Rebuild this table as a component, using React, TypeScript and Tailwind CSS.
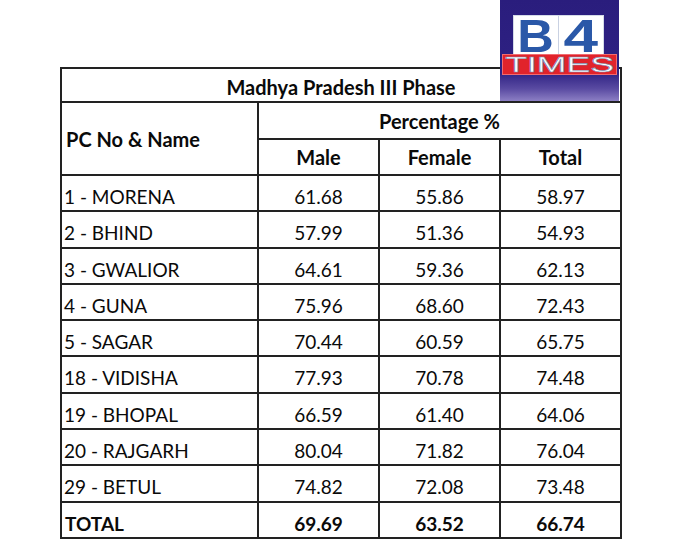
import React from "react";

const rows: [string, string, string, string][] = [
  ["1 - MORENA", "61.68", "55.86", "58.97"],
  ["2 - BHIND", "57.99", "51.36", "54.93"],
  ["3 - GWALIOR", "64.61", "59.36", "62.13"],
  ["4 - GUNA", "75.96", "68.60", "72.43"],
  ["5 - SAGAR", "70.44", "60.59", "65.75"],
  ["18 - VIDISHA", "77.93", "70.78", "74.48"],
  ["19 - BHOPAL", "66.59", "61.40", "64.06"],
  ["20 - RAJGARH", "80.04", "71.82", "76.04"],
  ["29 - BETUL", "74.82", "72.08", "73.48"],
];

function Logo() {
  return (
    <div className="absolute left-[500px] top-0 w-[119px] h-[101px] bg-[linear-gradient(to_bottom,#2a1d7d_0%,#2e2183_72%,#5a4ba2_88%,#8c7fc4_100%)]">
      <div className="absolute left-[13px] top-[15px] w-[91px] h-[40px] bg-white border border-[#d5dbe8] flex">
        <div className="w-1/2 h-full border-r border-[#c9d1e2]" />
        <div className="w-1/2 h-full" />
      </div>
      <div className="absolute left-[13px] top-[16px] w-[45px] h-[38px] overflow-hidden text-center text-[46px] leading-[38px] font-bold text-[#2a58a8] [font-family:'Liberation_Sans',Arial,sans-serif]">
        <span className="inline-block scale-x-[1.1] translate-y-[1px]">B</span>
      </div>
      <div className="absolute left-[58px] top-[16px] w-[45px] h-[38px] overflow-hidden text-center text-[46px] leading-[38px] font-bold text-[#2a58a8] [font-family:'Liberation_Sans',Arial,sans-serif]">
        <span className="inline-block scale-x-[1.35] translate-y-[1px]">4</span>
      </div>
      <div className="absolute left-[2px] top-[54px] w-[115px] h-[21px] bg-[#e1232b] border border-[#f06a70] flex items-center justify-center">
        <span className="inline-block text-[22px] leading-[19px] text-white scale-x-[1.62] [font-family:'Liberation_Sans',Arial,sans-serif] [-webkit-text-stroke:0.6px_#7d8fb3]">
          TIMES
        </span>
      </div>
    </div>
  );
}

export default function App() {
  const cell = "bg-white flex items-center";
  const data = "bg-white flex items-center pt-[8px] text-[19px]";
  return (
    <div className="relative w-[682px] h-[551px] bg-white overflow-hidden [font-family:Lato,'Liberation_Sans',sans-serif] text-[#0a0a0a]">
      <div className="absolute left-[60px] top-[67px] grid grid-cols-[195px_119px_119px_119px] grid-rows-[32px_35px_34px_34px_35px_34px_34px_34px_35px_34px_34px_35px_34px] gap-[2px] p-[2px] bg-[#222]">
        <div className={`${cell} col-span-4 justify-center font-bold text-[20px] pt-[3px]`}>
          Madhya Pradesh III Phase
        </div>
        <div className={`${cell} row-span-2 pl-[4px] font-bold text-[20px]`}>
          PC No &amp; Name
        </div>
        <div className={`${cell} col-span-3 justify-center font-bold text-[20px]`}>
          Percentage %
        </div>
        <div className={`${cell} justify-center font-bold text-[20px]`}>Male</div>
        <div className={`${cell} justify-center font-bold text-[20px]`}>Female</div>
        <div className={`${cell} justify-center font-bold text-[20px]`}>Total</div>
        {rows.map((r) => (
          <React.Fragment key={r[0]}>
            <div className={`${data} pl-[2px]`}>{r[0]}</div>
            <div className={`${data} justify-center`}>{r[1]}</div>
            <div className={`${data} justify-center`}>{r[2]}</div>
            <div className={`${data} justify-center`}>{r[3]}</div>
          </React.Fragment>
        ))}
        <div className={`${data} pl-[3px] font-bold`}>TOTAL</div>
        <div className={`${data} justify-center font-bold`}>69.69</div>
        <div className={`${data} justify-center font-bold`}>63.52</div>
        <div className={`${data} justify-center font-bold`}>66.74</div>
      </div>
      <Logo />
    </div>
  );
}
